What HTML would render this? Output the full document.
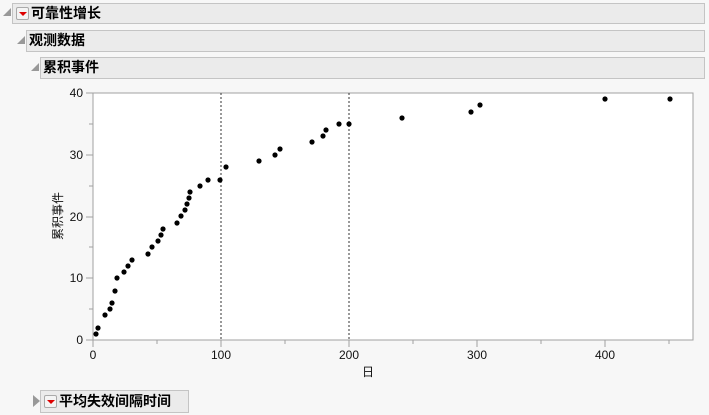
<!DOCTYPE html><html><head><meta charset="utf-8"><style>
body{margin:0;width:709px;height:415px;background:#f7f7f7;font-family:"Liberation Sans","Noto Sans CJK SC",sans-serif;position:relative;overflow:hidden}
.h{position:absolute;background:#ebebeb;border:1px solid #c4c4c4;font-weight:bold;font-size:14px;line-height:19px;color:#000;box-sizing:border-box}
.t{position:absolute;width:0;height:0;border-left:8px solid transparent;border-bottom:8px solid #999}
.d{display:inline-block;width:13px;height:13px;border:1px solid #aaa;border-radius:2px;background:#f4f4f4;vertical-align:-2px;margin:0 2px 0 3px;position:relative;box-sizing:border-box}
.d:after{content:"";position:absolute;left:2px;top:4px;border-left:4px solid transparent;border-right:4px solid transparent;border-top:4px solid #d00}
</style></head><body>
<div class="t" style="left:3px;top:8px"></div>
<div class="h" style="left:12px;top:3px;width:693px;height:21px"><span class="d"></span>可靠性增长</div>
<div class="t" style="left:17px;top:36px"></div>
<div class="h" style="left:26px;top:30px;width:679px;height:22px;padding-left:2px">观测数据</div>
<div class="t" style="left:31px;top:63px"></div>
<div class="h" style="left:40px;top:57px;width:665px;height:22px;padding-left:2px">累积事件</div>
<div style="position:absolute;left:33px;top:395px;width:0;height:0;border-top:6px solid transparent;border-bottom:6px solid transparent;border-left:7px solid #999"></div>
<div class="h" style="left:40px;top:390px;width:149px;height:23px;line-height:21px"><span class="d"></span>平均失效间隔时间</div>
<svg style="position:absolute;left:0;top:0" width="709" height="415" font-family="Liberation Sans" font-size="12">
<rect x="93" y="93" width="600" height="247" fill="#fff" stroke="#a0a0a0"/>
<g stroke="#a0a0a0">
<line x1="86" y1="93" x2="93" y2="93"/><line x1="86" y1="155" x2="93" y2="155"/><line x1="86" y1="217" x2="93" y2="217"/><line x1="86" y1="278" x2="93" y2="278"/><line x1="86" y1="340" x2="93" y2="340"/>
<line x1="89" y1="124" x2="93" y2="124"/><line x1="89" y1="186" x2="93" y2="186"/><line x1="89" y1="247" x2="93" y2="247"/><line x1="89" y1="309" x2="93" y2="309"/>
<line x1="93" y1="340" x2="93" y2="347"/><line x1="221" y1="340" x2="221" y2="347"/><line x1="349" y1="340" x2="349" y2="347"/><line x1="477" y1="340" x2="477" y2="347"/><line x1="605" y1="340" x2="605" y2="347"/>
<line x1="157" y1="340" x2="157" y2="344"/><line x1="285" y1="340" x2="285" y2="344"/><line x1="413" y1="340" x2="413" y2="344"/><line x1="541" y1="340" x2="541" y2="344"/><line x1="669" y1="340" x2="669" y2="344"/>
</g>
<g stroke="#333" stroke-dasharray="2,2"><line x1="221" y1="93" x2="221" y2="340"/><line x1="349" y1="93" x2="349" y2="340"/></g>
<g text-anchor="end" fill="#111"><text x="83" y="97">40</text><text x="83" y="159">30</text><text x="83" y="221">20</text><text x="83" y="282">10</text><text x="83" y="344">0</text></g>
<g text-anchor="middle" fill="#111"><text x="93" y="359">0</text><text x="221" y="359">100</text><text x="349" y="359">200</text><text x="477" y="359">300</text><text x="605" y="359">400</text>
<text x="368" y="376" font-family="Liberation Sans,Noto Sans CJK SC">日</text>
<text transform="translate(62,216) rotate(-90)" font-family="Liberation Sans,Noto Sans CJK SC">累积事件</text></g>
<g fill="#000">
<circle cx="96" cy="334" r="2.6"/><circle cx="98" cy="328" r="2.6"/><circle cx="105" cy="315" r="2.6"/><circle cx="110" cy="309" r="2.6"/><circle cx="112" cy="303" r="2.6"/><circle cx="115" cy="291" r="2.6"/><circle cx="117" cy="278" r="2.6"/><circle cx="124" cy="272" r="2.6"/><circle cx="128" cy="266" r="2.6"/><circle cx="132" cy="260" r="2.6"/><circle cx="148" cy="254" r="2.6"/><circle cx="152" cy="247" r="2.6"/><circle cx="158" cy="241" r="2.6"/><circle cx="161" cy="235" r="2.6"/><circle cx="163" cy="229" r="2.6"/><circle cx="177" cy="223" r="2.6"/><circle cx="181" cy="216" r="2.6"/><circle cx="185" cy="210" r="2.6"/><circle cx="187" cy="204" r="2.6"/><circle cx="189" cy="198" r="2.6"/><circle cx="190" cy="192" r="2.6"/><circle cx="200" cy="186" r="2.6"/><circle cx="208" cy="180" r="2.6"/><circle cx="220" cy="180" r="2.6"/><circle cx="226" cy="167" r="2.6"/><circle cx="259" cy="161" r="2.6"/><circle cx="275" cy="155" r="2.6"/><circle cx="280" cy="149" r="2.6"/><circle cx="312" cy="142" r="2.6"/><circle cx="323" cy="136" r="2.6"/><circle cx="326" cy="130" r="2.6"/><circle cx="339" cy="124" r="2.6"/><circle cx="349" cy="124" r="2.6"/><circle cx="402" cy="118" r="2.6"/><circle cx="471" cy="112" r="2.6"/><circle cx="480" cy="105" r="2.6"/><circle cx="605" cy="99" r="2.6"/><circle cx="670" cy="99" r="2.6"/>
</g></svg>
</body></html>
